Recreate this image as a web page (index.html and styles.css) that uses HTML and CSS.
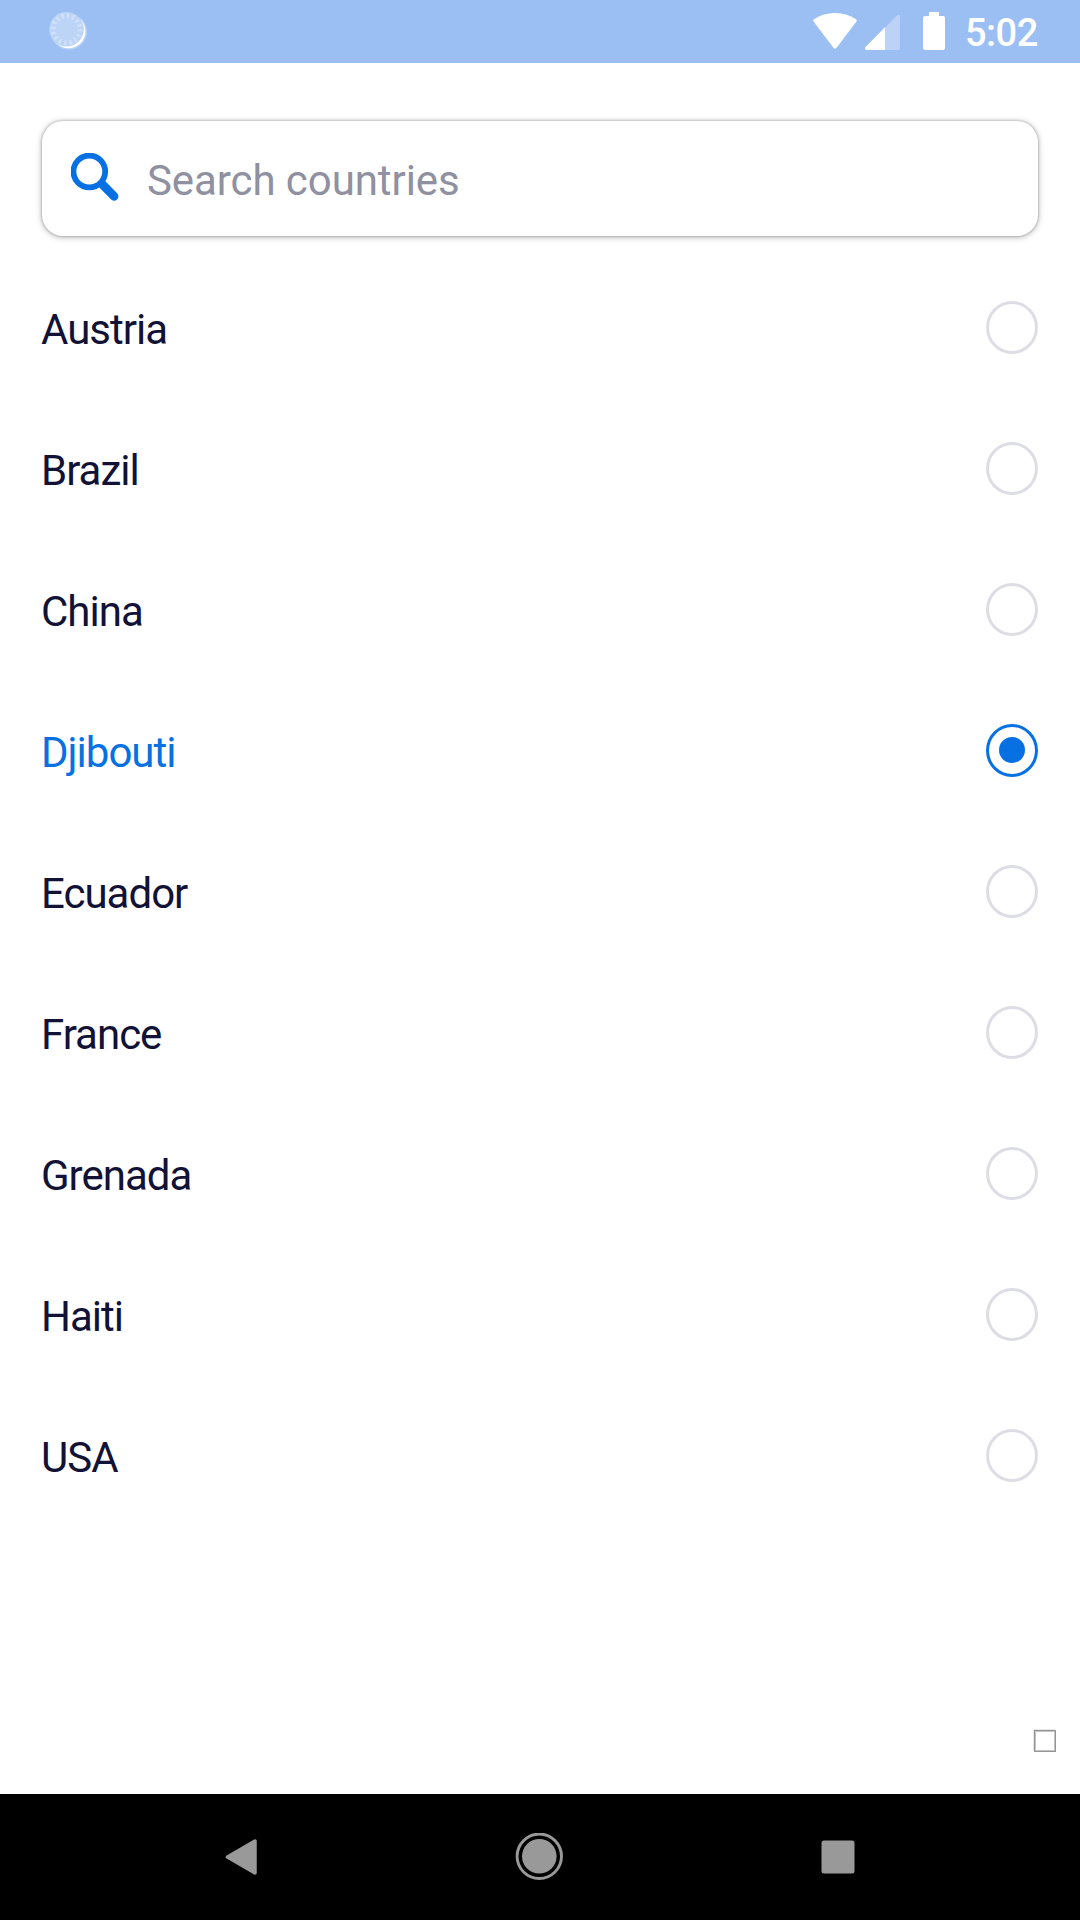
FILE: index.html
```html
<!DOCTYPE html>
<html lang="en">
<head>
<meta charset="utf-8">
<title>Countries</title>
<link rel="stylesheet" href="styles.css">
</head>
<body>
<div class="screen">
  <header class="status-bar">
    <svg class="sync-icon" width="42" height="42" viewBox="0 0 42 42">
      <circle cx="20" cy="19.800" r="18" fill="#fff" opacity=".25"/>
      <circle cx="19.500" cy="19.300" r="17" fill="#fff"/>
      <circle cx="17.500" cy="17.300" r="17.300" fill="#bcd4f6"/>
      <circle cx="17.500" cy="17.300" r="13.500" fill="none" stroke="#d0e1f9" stroke-width="5" stroke-dasharray="2.200 3.102"/>
    </svg>
    <div class="status-right">
      <svg class="wifi" width="46" height="38" viewBox="0 0 46 38"><path d="M2.300 10.500Q.2 8.500 2.300 7Q11 1 23 1T43.700 7Q45.800 8.500 43.700 10.500L24.800 35.500Q23 37.800 21.200 35.500Z" fill="#fff"/></svg>
      <svg class="signal" width="35" height="36" viewBox="0 0 35 36"><path d="M20 13.500L32.500 1Q35 0 35 2.500V34Q35 36 33 36H20Z" fill="#bcd3f7"/><path d="M20 13.300V36H1.500Q-1 35.500 .5 33Z" fill="#fff"/></svg>
      <svg class="battery" width="22" height="38" viewBox="0 0 22 38"><path d="M6 0H16V4H20Q22 4 22 6V36Q22 38 20 38H2Q0 38 0 36V6Q0 4 2 4H6Z" fill="#fff"/></svg>
      <span class="clock">5:02</span>
    </div>
  </header>
  <main class="content">
    <label class="search">
      <svg class="search-icon" width="48" height="48" viewBox="0 0 48 48" fill="none" stroke="#0770e3"><circle cx="18.300" cy="18.500" r="15.900" stroke-width="5.800"/><path d="M31 31L43 43.300" stroke-width="8.800" stroke-linecap="round"/></svg>
      <span class="placeholder">Search countries</span>
    </label>
    <ul class="countries">
      <li class="country"><span class="name">Austria</span><span class="radio"></span></li>
      <li class="country"><span class="name">Brazil</span><span class="radio"></span></li>
      <li class="country"><span class="name">China</span><span class="radio"></span></li>
      <li class="country selected"><span class="name">Djibouti</span><span class="radio"></span></li>
      <li class="country"><span class="name">Ecuador</span><span class="radio"></span></li>
      <li class="country"><span class="name">France</span><span class="radio"></span></li>
      <li class="country"><span class="name">Grenada</span><span class="radio"></span></li>
      <li class="country"><span class="name">Haiti</span><span class="radio"></span></li>
      <li class="country"><span class="name">USA</span><span class="radio"></span></li>
    </ul>
    <span class="corner-box"></span>
  </main>
  <nav class="nav-bar">
    <svg width="32" height="36" viewBox="0 0 32 36"><path d="M2.500 18L30 2V34Z" fill="#999" stroke="#999" stroke-width="3.500" stroke-linejoin="round"/></svg>
    <svg width="48" height="48" viewBox="0 0 48 48"><circle cx="24.300" cy="23.300" r="22.200" fill="none" stroke="#999" stroke-width="2.900"/><circle cx="24.300" cy="23.300" r="17.300" fill="#999"/></svg>
    <svg width="34" height="34" viewBox="0 0 34 34"><rect x=".5" y=".5" width="33" height="33" rx="2.500" fill="#999"/></svg>
  </nav>
</div>
</body>
</html>
```
FILE: styles.css
```css
* { box-sizing: border-box; }

body {
  margin: 0;
  font-family: Roboto, "Liberation Sans", sans-serif;
  background: #fff;
}

.screen {
  width: 1080px;
  height: 1920px;
  display: flex;
  flex-direction: column;
}

.status-bar {
  height: 63px;
  flex: none;
  padding: 0 42px 0 49px;
  display: flex;
  justify-content: space-between;
  background: #9cbff3;
}

.sync-icon { margin-top: 12px; }

.status-right {
  display: flex;
  align-items: flex-start;
}

.wifi { margin: 12px 7px 0 0; }
.signal { margin: 14px 23px 0 0; }
.battery { margin: 12px 20px 0 0; }

.clock {
  width: 73px;
  margin-top: 11px;
  font-size: 38px;
  line-height: 44px;
  font-weight: 500;
  letter-spacing: -.5px;
  color: #fff;
  white-space: nowrap;
}

.content {
  flex: 1;
  display: flex;
  flex-direction: column;
  padding: 58px 24px 42px 42px;
  background: #fff;
}

.search {
  height: 115px;
  flex: none;
  display: flex;
  align-items: center;
  gap: 28px;
  margin-right: 18px;
  padding-left: 29px;
  border-radius: 21px;
  background: #fff;
  box-shadow: 0 0 3px rgba(0, 0, 0, .28), 0 1px 6px rgba(0, 0, 0, .3);
}

.search-icon { margin-top: -3px; }

.placeholder {
  padding-top: 4px;
  font-size: 42px;
  line-height: 50px;
  letter-spacing: -.08px;
  color: #8f90a0;
  white-space: nowrap;
}

.countries {
  list-style: none;
  margin: 21px 18px 0 0;
  padding: 0;
}

.country {
  height: 141px;
  display: flex;
  align-items: center;
  justify-content: space-between;
  color: #111236;
}

.name {
  margin-left: -1px;
  padding-top: 4px;
  font-size: 42px;
  line-height: 50px;
  letter-spacing: -1px;
}

.radio {
  width: 52px;
  height: 53px;
  display: flex;
  align-items: center;
  justify-content: center;
  border: 3px solid #dddde5;
  border-radius: 50%;
}

.selected { color: #0770e3; }
.selected .radio { border-color: #0770e3; }

.selected .radio::after {
  content: "";
  width: 26px;
  height: 26px;
  margin-bottom: 1px;
  border-radius: 50%;
  background: #0770e3;
}

.corner-box {
  width: 22px;
  height: 22px;
  margin: auto 0 0 auto;
  border: 1px solid #959595;
  box-shadow: inset 0 0 0 1px #c4c4c4, -1px -1px 0 #e8e8e8;
}

.nav-bar {
  height: 126px;
  flex: none;
  display: flex;
  align-items: center;
  justify-content: space-between;
  padding: 0 225px;
  background: #000;
}
```
